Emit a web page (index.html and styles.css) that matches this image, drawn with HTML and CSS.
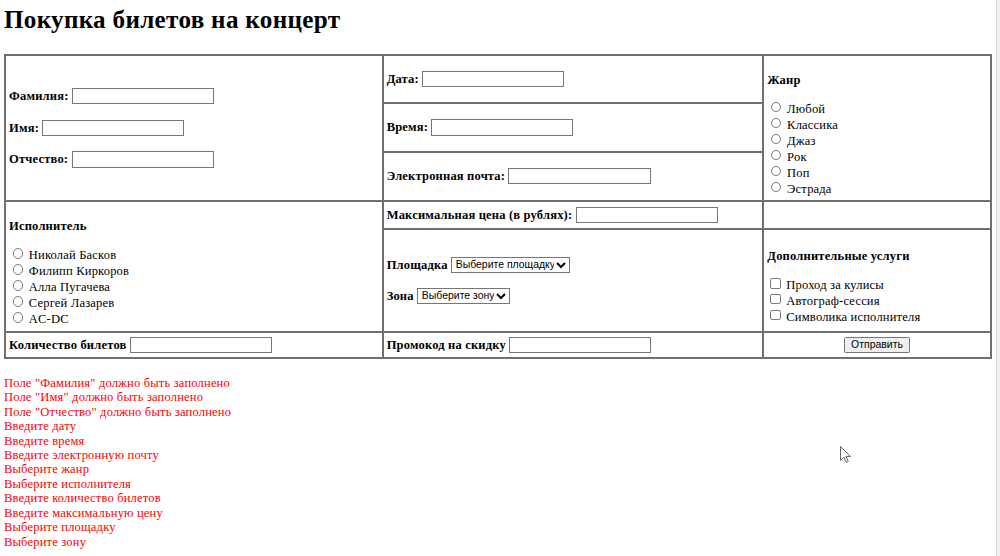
FILE: index.html
```html
<!DOCTYPE html>
<html lang="ru">
<head>
<meta charset="utf-8">
<title>Покупка билетов на концерт</title>
<link rel="stylesheet" href="styles.css">
</head>
<body class="page">
<h1 class="title">Покупка билетов на концерт</h1>
<form class="order">
<table class="grid">
<colgroup><col class="c1"><col class="c2"><col class="c3"></colgroup>
<tr class="r1">
  <td rowspan="3" class="names">
    <p><b>Фамилия:</b> <input type="text" class="field"></p>
    <p><b>Имя:</b> <input type="text" class="field"></p>
    <p><b>Отчество:</b> <input type="text" class="field"></p>
  </td>
  <td><b>Дата:</b> <input type="text" class="field"></td>
  <td rowspan="3">
    <p><b>Жанр</b></p>
    <input type="radio" class="radio" name="genre"> Любой<br>
    <input type="radio" class="radio" name="genre"> Классика<br>
    <input type="radio" class="radio" name="genre"> Джаз<br>
    <input type="radio" class="radio" name="genre"> Рок<br>
    <input type="radio" class="radio" name="genre"> Поп<br>
    <input type="radio" class="radio" name="genre"> Эстрада
  </td>
</tr>
<tr class="r2">
  <td><b>Время:</b> <input type="text" class="field"></td>
</tr>
<tr class="r3">
  <td><b>Электронная почта:</b> <input type="text" class="field"></td>
</tr>
<tr class="r4">
  <td rowspan="2">
    <p><b>Исполнитель</b></p>
    <input type="radio" class="radio" name="artist"> Николай Басков<br>
    <input type="radio" class="radio" name="artist"> Филипп Киркоров<br>
    <input type="radio" class="radio" name="artist"> Алла Пугачева<br>
    <input type="radio" class="radio" name="artist"> Сергей Лазарев<br>
    <input type="radio" class="radio" name="artist"> AC-DC
  </td>
  <td><b>Максимальная цена (в рублях):</b> <input type="text" class="field"></td>
  <td></td>
</tr>
<tr class="r5">
  <td class="venue">
    <p><b>Площадка</b> <select class="pick pick-wide"><option>Выберите площадку</option></select></p>
    <p><b>Зона</b> <select class="pick pick-narrow"><option>Выберите зону</option></select></p>
  </td>
  <td>
    <p><b>Дополнительные услуги</b></p>
    <input type="checkbox" class="check"> Проход за кулисы<br>
    <input type="checkbox" class="check"> Автограф-сессия<br>
    <input type="checkbox" class="check"> Символика исполнителя
  </td>
</tr>
<tr class="r6">
  <td><b>Количество билетов</b> <input type="text" class="field"></td>
  <td><b>Промокод на скидку</b> <input type="text" class="field"></td>
  <td class="center"><button type="button" class="send">Отправить</button></td>
</tr>
</table>
</form>
<div class="errors">
  <div>Поле "Фамилия" должно быть заполнено</div>
  <div>Поле "Имя" должно быть заполнено</div>
  <div>Поле "Отчество" должно быть заполнено</div>
  <div>Введите дату</div>
  <div>Введите время</div>
  <div>Введите электронную почту</div>
  <div>Выберите жанр</div>
  <div>Выберите исполнителя</div>
  <div>Введите количество билетов</div>
  <div>Введите максимальную цену</div>
  <div>Выберите площадку</div>
  <div>Выберите зону</div>
</div>
<svg class="cursor" viewBox="0 0 12 19" width="14" height="22"><path d="M0.5 0.5 L0.5 16 L4.3 12.4 L6.8 18 L9 17 L6.6 11.5 L11.5 11.5 Z" fill="#fff" stroke="#555" stroke-width="1" stroke-linejoin="round"/></svg>
<div class="scrollbar"></div>
</body>
</html>
```

FILE: styles.css
```css
.page {
  zoom: 0.785;
  margin: 0 0 0 5px;
  font-family: "Liberation Serif", "Times New Roman", serif;
  font-size: 16px;
  line-height: 18.4px;
  letter-spacing: 0.22px;
  color: #000;
  background: #fff;
}

.title {
  font-size: 32px;
  line-height: 36.8px;
  letter-spacing: 0.4px;
  font-weight: bold;
  margin: 8px 0 24px;
}

.order {
  margin: 0;
}

.grid {
  border-collapse: collapse;
  width: 1256px;
  table-layout: fixed;
}

.c1 { width: 481px; }
.c2 { width: 485px; }
.c3 { width: 290px; }

.grid td {
  border: 2.55px solid #6f6f6f;
  padding: 1px 4px;
  vertical-align: middle;
}

.grid p {
  margin: 16px 0;
}

.grid .names p {
  margin: 19.7px 0;
}

.grid .venue p {
  margin: 18.9px 0;
}

.r1 { height: 61.5px; }
.r2 { height: 61.7px; }
.r3 { height: 62.8px; }
.r4 { height: 35.3px; }
.r5 { height: 131.2px; }
.r6 { height: 33.9px; }

.center {
  text-align: center;
}

.field {
  box-sizing: border-box;
  width: 181px;
  height: 20.5px;
  margin: 0;
}

.radio {
  appearance: none;
  -webkit-appearance: none;
  box-sizing: border-box;
  width: 13px;
  height: 13px;
  margin: 3px 3px 0 5px;
  border: 1.3px solid #7a7a7a;
  border-radius: 50%;
  background: #fff;
}

.check {
  appearance: none;
  -webkit-appearance: none;
  box-sizing: border-box;
  width: 13px;
  height: 13px;
  margin: 3px 3px 0 4px;
  border: 1.3px solid #7a7a7a;
  border-radius: 2.5px;
  background: #fff;
}

.pick {
  box-sizing: border-box;
  height: 20.5px;
  padding: 0 0 0 1px;
  font-family: "Liberation Sans", Arial, sans-serif;
  font-size: 13.33px;
  letter-spacing: 0;
}

.pick-wide { width: 152px; }
.pick-narrow { width: 118px; }

.send {
  box-sizing: border-box;
  width: 83px;
  height: 20.5px;
  font-family: "Liberation Sans", Arial, sans-serif;
  font-size: 13.33px;
  letter-spacing: 0;
}

.errors {
  color: #ff0000;
  margin-top: 21px;
}

.cursor {
  position: absolute;
  left: 1070px;
  top: 568px;
}

.scrollbar {
  position: fixed;
  top: 0;
  right: 0;
  bottom: 0;
  width: 4px;
  background: #f1f1f1;
  border-left: 1px solid #dadada;
}
```
